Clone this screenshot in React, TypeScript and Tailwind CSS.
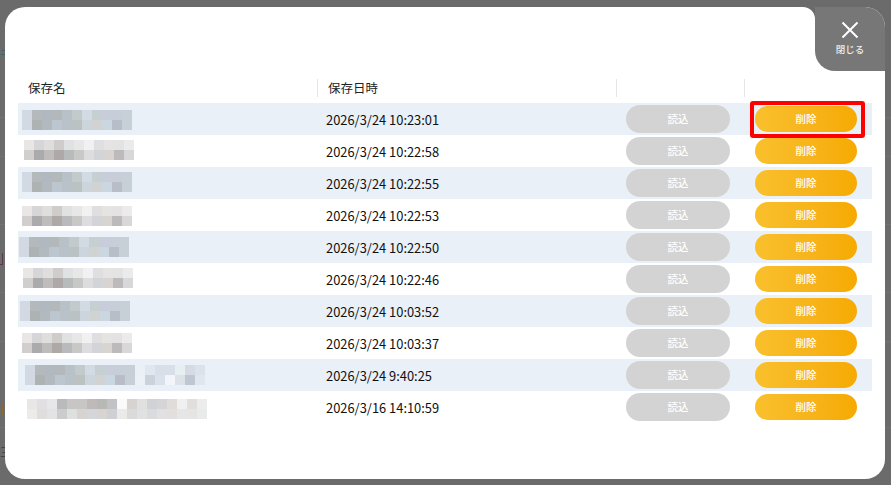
const blueTop = ["#d3d9e3", "#b4babc", "#b2b8bf", "#b3b9bb", "#b8c0c8", "#c2cacb", "#d2dbe3", "#c6cfd1", "#c7ced9", "#c8ced9", "#c7cfd7"];
const blueBottom = ["#d3d9e3", "#adb2b2", "#b2bac0", "#bcc6cf", "#b8c2c8", "#bcc2c2", "#ccd5dc", "#d0d3d2", "#cbd7e0", "#b9bdc7", "#c8d0d7"];
const grayTop = ["#e9e7e5", "#d6d6d8", "#dfdedc", "#cfcdcc", "#e0e1e1", "#e7e7e7", "#f1f1f1", "#dfdfe2", "#e5e4e2", "#e3e3e3", "#ebebec"];
const grayBottom = ["#d2cecd", "#ababad", "#bebdbc", "#aea9a6", "#b7bbbb", "#c8c9c7", "#dddddf", "#d3d4d7", "#d7d4d2", "#bcbaba", "#d8d8da"];

const blue = [blueTop, blueBottom];
const gray = [grayTop, grayBottom];
const longBlue = [
  [...blueTop, "#ebf0f6", "#e1e7f0", "#d9dfe8", "#d9dfe7", "#e8eff3", "#d5dae4", "#dbe2eb"],
  [...blueBottom, "#ecf1f8", "#cbd2dc", "#dbe1ea", "#f2f6fb", "#dce2e8", "#c0c6d2", "#dfe6ee"],
];
const longGray = [
  ["#e9e7e5", "#e0e0e3", "#e8e7e8", "#b9babc", "#c7c6c4", "#c8c6c4", "#bdbab9", "#b8b9b7", "#c1c2c6", "#fafafa", "#d7d3d0", "#dfe0df", "#d0d2d5", "#d5d4d6", "#e0dcda", "#f0f0f1", "#e0dfdd", "#ececec"],
  ["#ecebe9", "#dfdedd", "#e3e2e4", "#cdcccc", "#dde0de", "#d7d3d1", "#d4d6d9", "#d7d4d1", "#cfd0d4", "#ebeae8", "#dadada", "#e0e1e0", "#dbdbdd", "#e1e0e3", "#e2dfde", "#e7e6e6", "#e5e5e4", "#e9eaea"],
];

const saves = [
  { date: "2026/3/24 10:23:01", cells: blue, left: 4, top: 7 },
  { date: "2026/3/24 10:22:58", cells: gray, left: 6, top: 5 },
  { date: "2026/3/24 10:22:55", cells: blue, left: 4, top: 5 },
  { date: "2026/3/24 10:22:53", cells: gray, left: 4, top: 7 },
  { date: "2026/3/24 10:22:50", cells: blue, left: 1, top: 6 },
  { date: "2026/3/24 10:22:46", cells: gray, left: 5, top: 5 },
  { date: "2026/3/24 10:03:52", cells: blue, left: 2, top: 6 },
  { date: "2026/3/24 10:03:37", cells: gray, left: 4, top: 6 },
  { date: "2026/3/24 9:40:25", cells: longBlue, left: 7, top: 6 },
  { date: "2026/3/16 14:10:59", cells: longGray, left: 9, top: 8 },
];

const Mosaic = ({ cells, left, top }: { cells: string[][]; left: number; top: number }) => (
  <div className="flex flex-col" style={{ marginLeft: left, marginTop: top }}>
    {cells.map((row, i) => (
      <div key={i} className="flex">
        {row.map((color, j) => (
          <div key={j} className="w-[10px] h-[10px]" style={{ backgroundColor: color }} />
        ))}
      </div>
    ))}
  </div>
);

export default function App() {
  return (
    <div
      className="relative w-[891px] h-[485px] overflow-hidden bg-[#6b6b6b] pt-[7px] pl-[5px]"
      style={{ fontFamily: '"Noto Sans CJK JP", "Noto Sans", sans-serif' }}
    >
      {/* page behind the overlay */}
      <div className="absolute top-[117px] left-0 w-full h-px bg-[#727272]" />
      <div className="absolute top-[156px] left-0 w-full h-px bg-[#727272]" />
      <div className="absolute top-[224px] left-0 w-full h-px bg-[#727272]" />
      <div className="absolute top-[292px] left-0 w-full h-px bg-[#727272]" />
      <div className="absolute top-[341px] left-0 w-full h-px bg-[#727272]" />
      <div className="absolute top-[427px] left-0 w-full h-px bg-[#727272]" />
      <div className="absolute top-[47px] left-0 text-[13px] leading-[14px] text-[#3f6470]">千</div>
      <div className="absolute top-[445px] left-0 text-[12px] leading-[14px] text-[#444444]">三</div>
      <div className="absolute top-[253px] left-0 w-[3px] h-[12px] border-r border-b border-[#5a3a4a]" />
      <div className="absolute top-[404px] left-0 w-[3px] h-[12px] border-r border-b border-[#8a6a30]" />

      <div className="relative w-[880px] h-[472px] bg-white rounded-[20px]">
        <div className="absolute top-0 left-[798px] w-[12px] h-[12px] bg-[#6b6b6b]">
          <div className="w-full h-full bg-white rounded-tr-[12px]" />
        </div>
        <button className="absolute top-0 right-0 w-[70px] h-[64px] bg-[#777777] rounded-tr-[20px] rounded-bl-[20px] flex flex-col items-center">
          <svg width="18" height="18" viewBox="0 0 18 18" className="mt-[14px]">
            <path d="M1.5 1.5L16.5 16.5M16.5 1.5L1.5 16.5" stroke="#ffffff" strokeWidth="2" fill="none" />
          </svg>
          <span className="mt-[3px] text-[9.5px] leading-[14px] font-medium text-[#eeeeee]">閉じる</span>
        </button>

        <div className="ml-[13px] w-[854px] pt-[72px]">
          <div className="grid grid-cols-[299px_299px_128px_128px] h-[16px] mb-[8px] text-[12.5px] leading-[18px] text-[#222222]">
            <div className="pl-[10px]">保存名</div>
            <div className="border-l border-[#e6e6e6] pl-[10px]">保存日時</div>
            <div className="border-l border-[#e6e6e6]" />
            <div className="border-l border-[#e6e6e6]" />
          </div>

          {saves.map((save, i) => (
            <div
              key={i}
              className={`grid grid-cols-[299px_299px_128px_128px] grid-rows-[32px] h-[32px] ${i % 2 === 0 ? "bg-[#e9f0f7]" : "bg-white"}`}
            >
              <Mosaic cells={save.cells} left={save.left} top={save.top} />
              <div className="pl-[9px] text-[12.9px] leading-[34px] text-[#111111]">{save.date}</div>
              <div className="pl-[10px] flex items-center">
                <button className="w-[104px] h-[28px] pb-[1px] rounded-full bg-[#d3d3d3] text-white text-[10.5px] leading-[16px] font-medium">読込</button>
              </div>
              <div className="pl-[11px] flex items-center">
                <button className="w-[102px] h-[26px] pb-[1px] rounded-full bg-linear-to-r from-[#f9c02c] to-[#f6aa00] text-white text-[10.5px] leading-[16px] font-medium">削除</button>
              </div>
            </div>
          ))}
        </div>

        {/* highlight annotation */}
        <div className="absolute left-[745px] top-[94px] w-[115px] h-[37px] border-4 border-[#ff0000] rounded-[3px]" />
      </div>
    </div>
  );
}
